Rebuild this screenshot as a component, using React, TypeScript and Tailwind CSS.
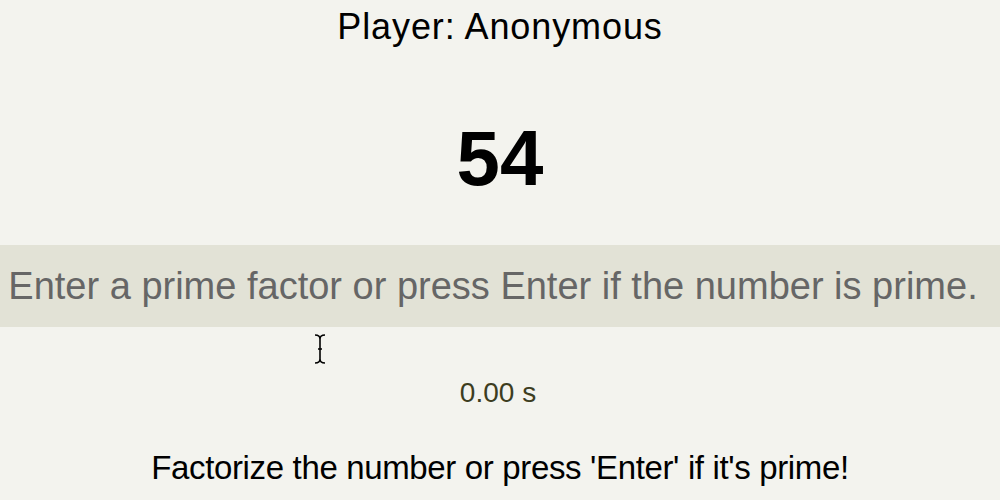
import React from "react";

export default function App() {
  return (
    <div
      className="relative w-[1000px] h-[500px] overflow-hidden bg-[#f3f3ee] flex flex-col items-center text-black"
      style={{ fontFamily: '"Liberation Sans", Arial, sans-serif' }}
    >
      <div className="mt-[7px] text-[36px] leading-[40px] tracking-[0.9px] whitespace-nowrap">Player: Anonymous</div>
      <div className="mt-[66px] text-[78px] leading-[90px] font-bold">54</div>
      <div className="mt-[42px] w-full h-[82px] bg-[#e2e2d6] flex items-center justify-center pr-[14px]">
        <span className="text-[38px] leading-[44px] text-[#666666] whitespace-nowrap">
          Enter a prime factor or press Enter if the number is prime.
        </span>
      </div>
      <div className="mt-[50px] text-[28px] leading-[32px] text-[#3d3d1f] pr-[4px]">0.00 s</div>
      <div className="mt-[40px] text-[33px] leading-[38px] tracking-[-0.35px] whitespace-nowrap">
        Factorize the number or press 'Enter' if it's prime!
      </div>
      <svg
        className="absolute left-[313px] top-[333px]"
        width="16"
        height="32"
        viewBox="0 0 16 32"
      >
        <path
          d="M2 2 C5 2 7 3 7 6 L7 26 C7 29 5 30 2 30 M12 2 C9 2 7 3 7 6 M7 26 C7 29 9 30 12 30 M5 16 L9 16"
          stroke="#000"
          strokeWidth="1.6"
          fill="none"
        />
      </svg>
    </div>
  );
}
